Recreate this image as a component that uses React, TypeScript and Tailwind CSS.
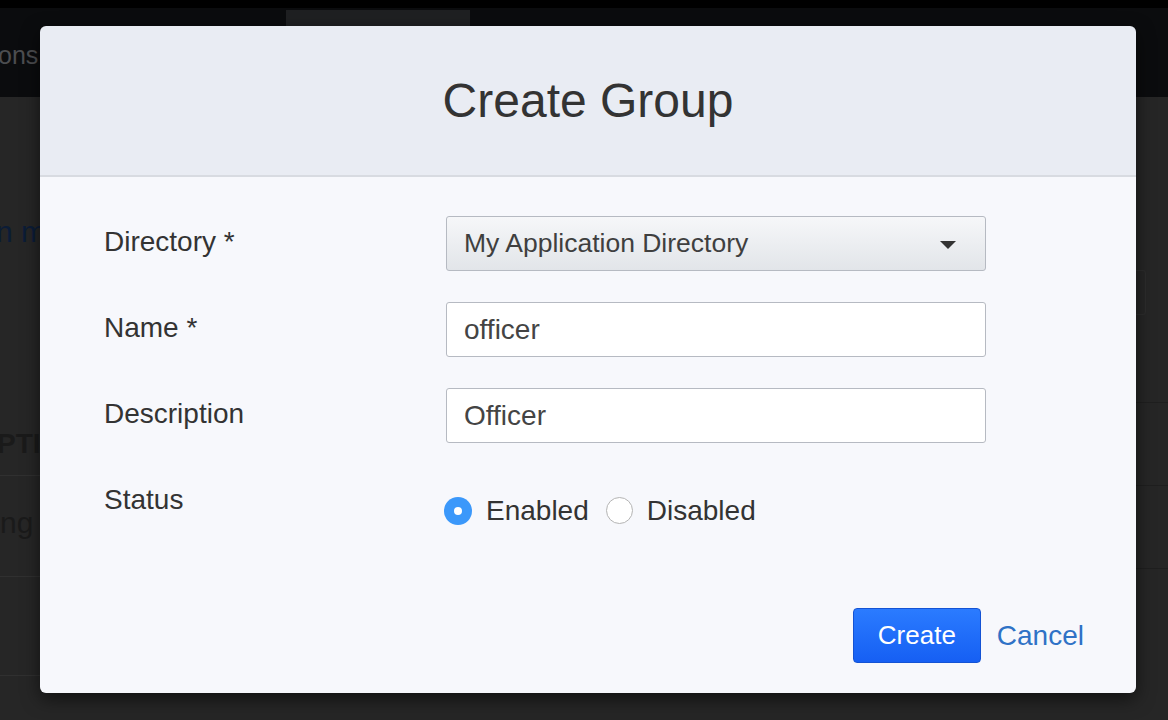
import React from 'react';

const font = "font-['Liberation_Sans','Helvetica_Neue',Arial,sans-serif]";

function Backdrop() {
  return (
    <div className="flex flex-col h-full">
      <div className="h-2 bg-black" />
      <div className="h-[89px] bg-[#0b0c0e] flex">
        <div className="w-[43px] overflow-hidden flex items-center pt-[6px]">
          <span className="whitespace-nowrap -ml-[2px] text-[25px] text-[#4c4d50]">ons</span>
        </div>
        <div className="ml-[243px] mt-[2px] w-[184px] bg-[#1f2022]" />
      </div>
      <div className="flex-1 flex justify-between">
        <div className="w-[60px] overflow-hidden flex flex-col">
          <div className="mt-[117px] -ml-[4px] whitespace-nowrap text-[30px] leading-[36px] text-[#0b1c37]">n more about groups</div>
          <div className="mt-[178px] -ml-[3px] whitespace-nowrap text-[28px] leading-[32px] font-bold text-[#1a1a1a]">PTION</div>
          <div className="mt-[15px] h-px bg-[#303030]" />
          <div className="mt-[29px] whitespace-nowrap text-[30px] leading-[36px] text-[#1a1a1a]">ng</div>
          <div className="mt-[35px] h-px bg-[#303030]" />
          <div className="mt-[98px] h-px bg-[#303030]" />
        </div>
        <div className="w-[80px] flex flex-col">
          <div className="mt-[173px] w-[58px] h-[45px] border border-[#2d2d2d] rounded-[3px]" />
          <div className="mt-[87px] h-px bg-[#1f1f1f]" />
          <div className="mt-[82px] h-px bg-[#1f1f1f]" />
          <div className="mt-[82px] h-px bg-[#1f1f1f]" />
        </div>
      </div>
    </div>
  );
}

function Row({ label, children }: { label: string; children: React.ReactNode }) {
  return (
    <div className="h-[55px] flex items-center">
      <div className="w-[342px] text-[28px] text-[#333] -mt-[4px]">{label}</div>
      <div className="w-[540px] h-full flex items-center">{children}</div>
    </div>
  );
}

function Radio({ checked, label }: { checked?: boolean; label: string }) {
  return (
    <label className="flex items-center">
      {checked ? (
        <span className="w-[28px] h-[28px] rounded-full bg-[#3b98fa] flex items-center justify-center">
          <span className="w-[8px] h-[8px] rounded-full bg-white" />
        </span>
      ) : (
        <span className="w-[27px] h-[27px] rounded-full bg-white border border-[#b4b4b4]" />
      )}
      <span className="ml-[14px] text-[28px] text-[#333]">{label}</span>
    </label>
  );
}

export default function App() {
  return (
    <div className={`relative w-[1168px] h-[720px] overflow-hidden bg-[#262626] ${font}`}>
      <Backdrop />

      <div className="absolute left-[40px] top-[26px] w-[1096px] rounded-[6px] overflow-hidden shadow-[0_6px_18px_rgba(0,0,0,0.55)]">
        <div className="h-[151px] bg-[#e9ecf3] border-b-2 border-[#d8dbe1] flex items-center justify-center">
          <h1 className="text-[48px] text-[#333] leading-none">Create Group</h1>
        </div>

        <div className="bg-[#f7f8fc] pt-[39px] pl-[64px] pr-[52px] pb-[30px]">
          <div className="flex flex-col gap-[31px]">
            <Row label="Directory *">
              <div className="w-full h-full rounded-[3px] border border-[#b6bac2] bg-gradient-to-b from-[#f6f7f9] to-[#e2e5e9] flex items-center justify-between pl-[17px] pr-[29px]">
                <span className="text-[26.5px] text-[#3f3f3f]">My Application Directory</span>
                <svg width="16" height="8" viewBox="0 0 16 8" className="mt-[2px]">
                  <path d="M0 0H16L8 8Z" fill="#333" />
                </svg>
              </div>
            </Row>
            <Row label="Name *">
              <div className="w-full h-full rounded-[3px] border border-[#b6bac2] bg-white flex items-center pl-[17px]">
                <span className="text-[28px] text-[#444]">officer</span>
              </div>
            </Row>
            <Row label="Description">
              <div className="w-full h-full rounded-[3px] border border-[#b6bac2] bg-white flex items-center pl-[17px]">
                <span className="text-[28px] text-[#444]">Officer</span>
              </div>
            </Row>
            <Row label="Status">
              <div className="flex items-center gap-[17px] pt-[18px] -ml-[2px]">
                <Radio checked label="Enabled" />
                <Radio label="Disabled" />
              </div>
            </Row>
          </div>

          <div className="mt-[79px] flex justify-end items-center">
            <button className="w-[128px] h-[55px] rounded-[4px] border border-[#1453d4] bg-gradient-to-b from-[#2b7bff] to-[#165ff3] text-white text-[26px]">
              Create
            </button>
            <span className="ml-[16px] text-[28px] text-[#2f72c6]">Cancel</span>
          </div>
        </div>
      </div>
    </div>
  );
}
